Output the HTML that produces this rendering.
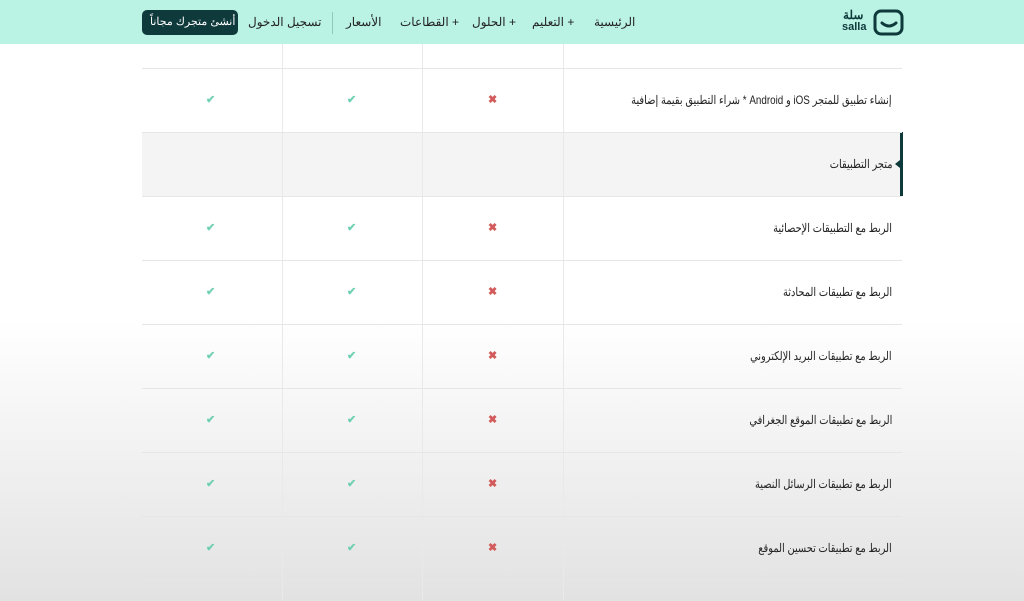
<!DOCTYPE html>
<html><head><meta charset="utf-8"><style>
body{margin:0;width:1024px;height:601px;overflow:hidden;background:#fff;font-family:"Liberation Sans","Noto Sans CJK SC",sans-serif;position:relative}
.hdr{position:absolute;left:0;top:0;width:1024px;height:44px;background:#baf3e4}
.t{position:absolute;white-space:nowrap;font-size:12px;color:#222;direction:rtl}
.r{transform:scaleX(0.82);transform-origin:right center}
.hl{position:absolute;background:#e6e6e6;height:1px;left:142px;width:760px}
.vl{position:absolute;background:#e9e9e9;width:1px;top:44px;height:557px}
.ck{position:absolute;color:#6fd0b4;font-size:11px;font-weight:bold}
.x{position:absolute;color:#d25a5a;font-size:11px;font-weight:bold}
.fade{position:absolute;left:0;top:320px;width:1024px;height:281px;background:linear-gradient(#ffffff,#e2e2e2)}
</style></head><body>
<div class="fade"></div>
<div class="hdr">
 <div style="position:absolute;left:142px;top:10px;width:96px;height:25px;background:#0f3a3c;border-radius:5px"></div>
 <div class="t" style="left:150px;top:15px;color:#fff;font-size:11px">أنشئ متجرك مجاناً</div>
 <div class="t" style="left:248px;top:15px">تسجيل الدخول</div>
 <div style="position:absolute;left:332px;top:12px;width:1px;height:22px;background:#8fc9bb"></div>
 <div class="t" style="left:346px;top:15px">الأسعار</div>
 <div class="t" style="left:400px;top:15px">+ القطاعات</div>
 <div class="t" style="left:472px;top:15px">+ الحلول</div>
 <div class="t" style="left:532px;top:15px">+ التعليم</div>
 <div class="t" style="left:594px;top:15px">الرئيسية</div>
 <div class="t" style="left:843px;top:8px;font-size:12px;font-weight:bold;color:#0f3a3c">سلة</div>
 <div class="t" style="left:842px;top:21px;font-size:11px;font-weight:bold;color:#0f3a3c;direction:ltr">salla</div>
 <svg style="position:absolute;left:873px;top:8px" width="32" height="28" viewBox="0 0 32 28"><rect x="2" y="3" width="27" height="23" rx="6" fill="none" stroke="#0f3a3c" stroke-width="3"/><path d="M9 15 Q16 21 23 15" fill="none" stroke="#0f3a3c" stroke-width="3" stroke-linecap="round"/></svg>
</div>
<div style="position:absolute;left:142px;top:132px;width:760px;height:64px;background:#f4f4f4"></div>
<div style="position:absolute;left:900px;top:132px;width:3px;height:64px;background:#0f3a3c"></div>
<div style="position:absolute;left:895px;top:160px;width:0;height:0;border-top:4px solid transparent;border-bottom:4px solid transparent;border-right:5px solid #0f3a3c"></div>
<div class="vl" style="left:282px"></div><div class="vl" style="left:422px"></div><div class="vl" style="left:563px"></div>
<div class="hl" style="top:68px"></div><div class="hl" style="top:132px"></div><div class="hl" style="top:196px"></div><div class="hl" style="top:260px"></div><div class="hl" style="top:324px"></div><div class="hl" style="top:388px"></div><div class="hl" style="top:452px"></div><div class="hl" style="top:516px"></div><div class="hl" style="top:580px"></div>
<div class="t r" style="right:132px;top:93px">إنشاء تطبيق للمتجر iOS و Android * شراء التطبيق بقيمة إضافية</div>
<div class="t r" style="right:132px;top:157px">متجر التطبيقات</div>
<div class="t r" style="right:132px;top:221px">الربط مع التطبيقات الإحصائية</div>
<div class="t r" style="right:132px;top:285px">الربط مع تطبيقات المحادثة</div>
<div class="t r" style="right:132px;top:349px">الربط مع تطبيقات البريد الإلكتروني</div>
<div class="t r" style="right:132px;top:413px">الربط مع تطبيقات الموقع الجغرافي</div>
<div class="t r" style="right:132px;top:477px">الربط مع تطبيقات الرسائل النصية</div>
<div class="t r" style="right:132px;top:541px">الربط مع تطبيقات تحسين الموقع</div>
<div class="ck" style="left:206px;top:93px">✔</div><div class="ck" style="left:347px;top:93px">✔</div><div class="x" style="left:488px;top:93px">✖</div>
<div class="ck" style="left:206px;top:221px">✔</div><div class="ck" style="left:347px;top:221px">✔</div><div class="x" style="left:488px;top:221px">✖</div>
<div class="ck" style="left:206px;top:285px">✔</div><div class="ck" style="left:347px;top:285px">✔</div><div class="x" style="left:488px;top:285px">✖</div>
<div class="ck" style="left:206px;top:349px">✔</div><div class="ck" style="left:347px;top:349px">✔</div><div class="x" style="left:488px;top:349px">✖</div>
<div class="ck" style="left:206px;top:413px">✔</div><div class="ck" style="left:347px;top:413px">✔</div><div class="x" style="left:488px;top:413px">✖</div>
<div class="ck" style="left:206px;top:477px">✔</div><div class="ck" style="left:347px;top:477px">✔</div><div class="x" style="left:488px;top:477px">✖</div>
<div class="ck" style="left:206px;top:541px">✔</div><div class="ck" style="left:347px;top:541px">✔</div><div class="x" style="left:488px;top:541px">✖</div>
</body></html>
